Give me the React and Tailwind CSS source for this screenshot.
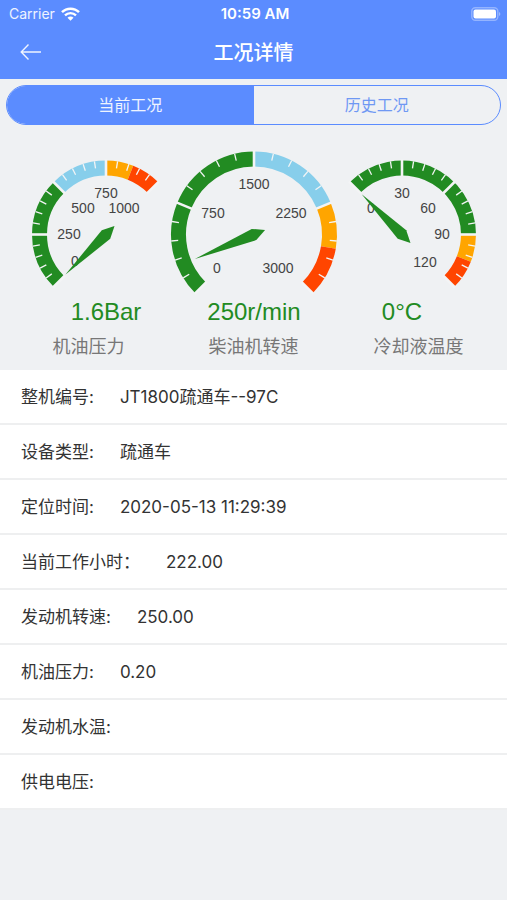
import React from "react";

const GREEN = "#228b22";
const SKY = "#87ceeb";
const ORANGE = "#ffa500";
const RED = "#ff4500";

const gauges = [
  {
    name: "机油压力",
    value: "1.6Bar",
    cx: 106,
    r: 74,
    from: 225,
    to: 45,
    pointer: 224.7,
    reach: 57,
    bands: [[0, 0.5, GREEN], [0.5, 0.75, SKY], [0.75, 0.87, ORANGE], [0.87, 1, RED]],
    labels: [["0", 75, 261], ["250", 69, 234], ["500", 83, 208], ["750", 106, 193], ["1000", 124, 208]],
  },
  {
    name: "柴油机转速",
    value: "250r/min",
    cx: 254,
    r: 83,
    from: 225,
    to: -45,
    pointer: 202.5,
    reach: 64,
    bands: [[0, 0.5, GREEN], [0.5, 0.75, SKY], [0.75, 0.87, ORANGE], [0.87, 1, RED]],
    labels: [["0", 217, 268], ["750", 213, 213], ["1500", 254, 184], ["2250", 291, 213], ["3000", 278, 268]],
  },
  {
    name: "冷却液温度",
    value: "0°C",
    cx: 402,
    r: 74,
    from: 135,
    to: -45,
    pointer: 135,
    reach: 57,
    bands: [[0, 0.75, GREEN], [0.75, 0.87, ORANGE], [0.87, 1, RED]],
    labels: [["0", 371, 208], ["30", 402, 193], ["60", 428, 208], ["90", 442, 234], ["120", 425, 262]],
  },
];

const rows = [
  ["整机编号:", "JT1800疏通车--97C"],
  ["设备类型:", "疏通车"],
  ["定位时间:", "2020-05-13 11:29:39"],
  ["当前工作小时：", "222.00"],
  ["发动机转速:", "250.00"],
  ["机油压力:", "0.20"],
  ["发动机水温:", ""],
  ["供电电压:", ""],
];

const CY = 234.5;

function polar(cx, r, deg) {
  const a = (deg * Math.PI) / 180;
  return [cx + r * Math.cos(a), CY - r * Math.sin(a)];
}

function Gauge({ g }) {
  const span = g.from - g.to;
  const mid = g.r - 7.5;
  const needle = [
    polar(g.cx, g.reach, g.pointer),
    polar(g.cx, 6, g.pointer - 90),
    polar(g.cx, 12, g.pointer + 180),
    polar(g.cx, 6, g.pointer + 90),
  ];
  return (
    <g>
      {g.bands.map(([a, b, color]) => {
        const [x1, y1] = polar(g.cx, mid, g.from - span * a);
        const [x2, y2] = polar(g.cx, mid, g.from - span * b);
        const large = span * (b - a) > 180 ? 1 : 0;
        return (
          <path
            key={a}
            d={`M${x1} ${y1}A${mid} ${mid} 0 ${large} 1 ${x2} ${y2}`}
            fill="none"
            stroke={color}
            strokeWidth="15"
          />
        );
      })}
      {Array.from({ length: 21 }, (_, i) => {
        const deg = g.from - (span * i) / 20;
        const major = i % 5 === 0;
        const [x1, y1] = polar(g.cx, g.r + (major ? 1 : 0), deg);
        const [x2, y2] = polar(g.cx, g.r - (major ? 16 : 7), deg);
        return (
          <line key={i} x1={x1} y1={y1} x2={x2} y2={y2} stroke="#f3f4f5" strokeWidth={major ? 2.6 : 1.3} />
        );
      })}
      {g.labels.map(([t, x, y]) => (
        <text key={t} x={x} y={y + 5} textAnchor="middle" fontSize="14" fill="#444">
          {t}
        </text>
      ))}
      <polygon points={needle.map((p) => p.join(",")).join(" ")} fill={GREEN} />
      <text x={g.cx} y="320" textAnchor="middle" fontSize="24" fill={GREEN}>
        {g.value}
      </text>
    </g>
  );
}

function StatusBar() {
  return (
    <div className="grid h-7 grid-cols-3 items-center pr-[6px] pl-[9px] text-white">
      <div className="flex items-center gap-[6px] text-sm leading-5 text-white/90">
        Carrier
        <svg width="19" height="14" viewBox="0 0 19 14" fill="none" aria-hidden="true">
          <path d="M1 5.200a12 12 0 0 1 17 0" stroke="#fff" strokeWidth="2.5" />
          <path d="M4 8.400a7.700 7.700 0 0 1 11 0" stroke="#fff" strokeWidth="2.300" />
          <path d="M9.500 13.800 6.500 10.800a4.200 4.200 0 0 1 6 0Z" fill="#fff" />
        </svg>
      </div>
      <div className="text-center text-[15px] leading-5 font-semibold">10:59 AM</div>
      <div className="flex justify-end">
        <svg width="30" height="14" viewBox="0 0 30 14" aria-hidden="true">
          <rect x="0.8" y="0.7" width="26" height="12.6" rx="3.5" fill="none" stroke="#fff" strokeOpacity="0.35" strokeWidth="1.4" />
          <rect x="2.5" y="2.5" width="22.500" height="9" rx="2" fill="#fff" />
          <path d="M28 5c1.800.8 1.800 3.200 0 4Z" fill="#fff" fillOpacity="0.4" />
        </svg>
      </div>
    </div>
  );
}

export default function App() {
  return (
    <div className="min-h-screen bg-[#eff1f3] font-['Inter','Noto_Sans_CJK_SC',sans-serif] text-[#333]">
      <header className="bg-[#5b8cff]">
        <StatusBar />
        <div className="grid h-[51px] grid-cols-[1fr_auto_1fr] items-center pb-[2px] text-white">
          <button type="button" aria-label="返回" className="w-10 pl-5">
            <svg width="22" height="20" viewBox="0 0 22 20" fill="none" stroke="#fff" strokeOpacity="0.9" strokeWidth="1.4" aria-hidden="true">
              <path d="M8.500 1.500 1.200 9l7.300 7.500M1.200 9H21" />
            </svg>
          </button>
          <h1 className="text-xl leading-7 font-medium">工况详情</h1>
        </div>
      </header>

      <main>
        <div className="px-[6px] pt-[6px]">
          <div className="grid h-10 grid-cols-2 overflow-hidden rounded-full border border-[#5b8cff] text-base">
            <button type="button" aria-pressed="true" className="bg-[#5b8cff] text-white/90">当前工况</button>
            <button type="button" aria-pressed="false" className="text-[#6f98f3]">历史工况</button>
          </div>
        </div>

        <section>
          <svg
            viewBox="0 125 507 205"
            className="block w-full font-['Liberation_Sans',Arial,sans-serif]"
            role="img"
            aria-label="工况仪表"
          >
            {gauges.map((g) => (
              <Gauge key={g.name} g={g} />
            ))}
          </svg>
          <div className="grid grid-cols-3 px-[6px] pt-1 pb-[10px] text-center text-lg leading-[26px] text-[#777]">
            {gauges.map((g) => (
              <span key={g.name}>{g.name}</span>
            ))}
          </div>
        </section>

        <dl className="bg-white text-[17px]">
          {rows.map(([label, value]) => (
            <div key={label} className="flex h-[55px] items-center gap-[26px] border-b-2 border-[#eeeff0] pt-[2px] pl-[21px]">
              <dt>{label}</dt>
              <dd>{value}</dd>
            </div>
          ))}
        </dl>
      </main>
    </div>
  );
}
